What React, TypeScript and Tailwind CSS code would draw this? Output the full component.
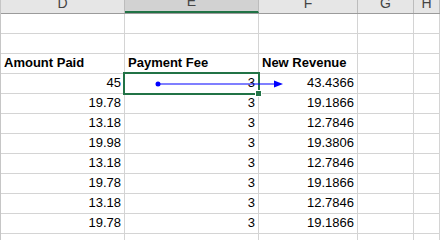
import React from "react";

const cols = [
  { key: "D", w: "w-[124px]" },
  { key: "E", w: "w-[134px]" },
  { key: "F", w: "w-[99px]" },
  { key: "G", w: "w-[56px]" },
  { key: "H", w: "flex-1" },
];

const rows: string[][] = [
  ["", "", "", "", ""],
  ["", "", "", "", ""],
  ["Amount Paid", "Payment Fee", "New Revenue", "", ""],
  ["45", "3", "43.4366", "", ""],
  ["19.78", "3", "19.1866", "", ""],
  ["13.18", "3", "12.7846", "", ""],
  ["19.98", "3", "19.3806", "", ""],
  ["13.18", "3", "12.7846", "", ""],
  ["19.78", "3", "19.1866", "", ""],
  ["13.18", "3", "12.7846", "", ""],
  ["19.78", "3", "19.1866", "", ""],
  ["", "", "", "", ""],
];

export default function App() {
  return (
    <div
      className="relative w-[440px] h-[240px] overflow-hidden bg-white border-l border-[#c6c6c6] text-black"
      style={{ fontFamily: '"Liberation Sans", Arial, sans-serif' }}
    >
      {/* column headers */}
      <div className="flex h-[14px] bg-[#e6e6e6] border-b border-[#9b9b9b] overflow-hidden">
        {cols.map((c) => (
          <div
            key={c.key}
            className={`${c.w} shrink-0 flex items-end justify-center text-[14px] leading-[20px] text-[#444] border-r border-[#bcbcbc] ${
              c.key === "E" ? "bg-[#d2d2d2] border-b-2 border-b-[#217346]" : ""
            }`}
          >
            <span>{c.key}</span>
          </div>
        ))}
      </div>

      {/* body */}
      {rows.map((r, ri) => (
        <div key={ri} className="flex h-[20px] border-b border-[#d4d4d4]">
          {r.map((v, ci) => {
            const header = ri === 2;
            return (
              <div
                key={ci}
                className={`${cols[ci].w} shrink-0 flex items-end pb-[2px] px-[3px] text-[13px] leading-[16px] border-r border-[#d4d4d4] whitespace-nowrap ${
                  header ? "font-bold justify-start" : "justify-end"
                }`}
              >
                {v}
              </div>
            );
          })}
        </div>
      ))}

      {/* active cell */}
      <div className="absolute left-[122px] top-[72px] w-[137px] h-[23px] border-2 border-[#217346]" />
      <div className="absolute left-[255px] top-[91px] w-[5px] h-[5px] bg-[#217346] outline outline-1 outline-white" />

      {/* trace precedents arrow */}
      <svg className="absolute left-0 top-0" width="440" height="240">
        <circle cx="157" cy="84" r="2.5" fill="#0000ff" />
        <line x1="157" y1="84" x2="275" y2="84" stroke="#0000ff" strokeWidth="1.2" />
        <polygon points="273,80.5 282,84 273,87.5" fill="#0000ff" />
      </svg>
    </div>
  );
}
